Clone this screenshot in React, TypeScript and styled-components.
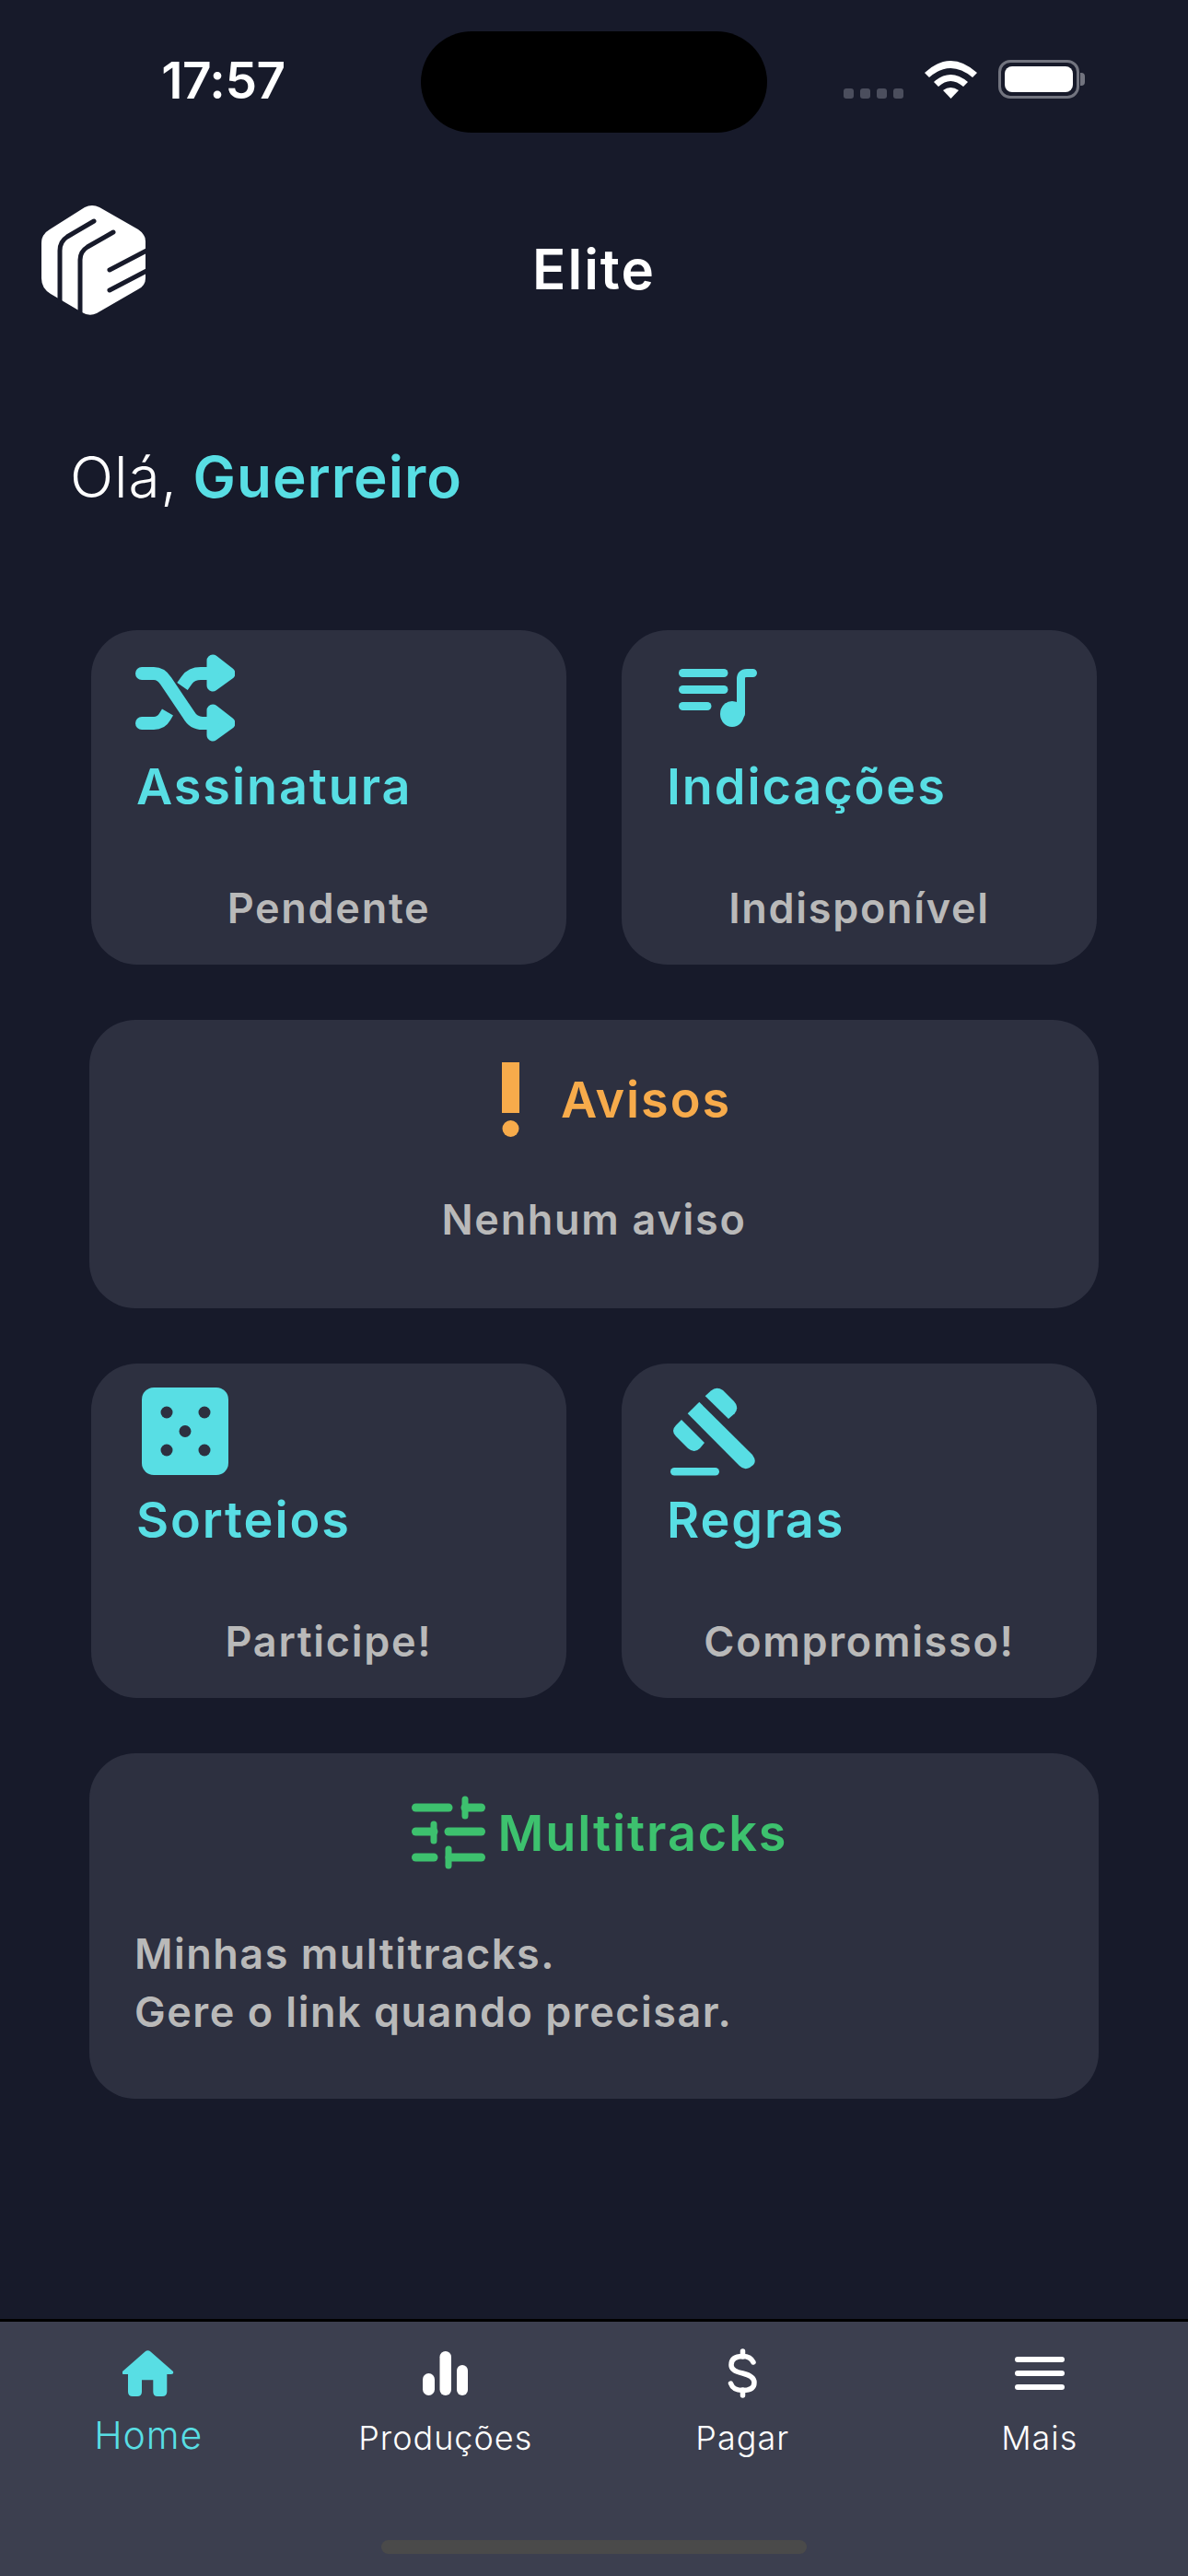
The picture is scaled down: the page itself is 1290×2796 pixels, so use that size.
import React from "react"
import styled, { createGlobalStyle } from "styled-components"

const CYAN = "#58dee4"
const ORANGE = "#f7ab4b"
const GREEN = "#3dc16e"
const GREY = "#b9b9b9"

const Global = createGlobalStyle`
 html, body {
  margin: 0;
  padding: 0;
  background: #171a2a;
 }

 * {
  box-sizing: border-box;
 }
`

const Logo = () => (
 <svg width="113" height="120" viewBox="0 0 113 120">
  <path
   d="M47 3 Q55 -1 63 3 L105 27 Q113 32 113 40 L113 80 Q113 88 105 92 L60 118 Q52 122 44 117 L10 97 Q0 91 0 80 L0 42 Q0 32 9 27 Z"
   fill="#fff"
  />
  <g fill="none" stroke="#171a2a" strokeWidth="5" strokeLinecap="round">
   <path d="M57 18 L28 35 Q20 40 20 50 L20 106" />
   <path d="M78 30 L50 46 Q42 51 42 60 L42 120" />
   <path d="M116 49 L74 71" />
   <path d="M116 71 L74 93" />
  </g>
 </svg>
)

const Wifi = () => (
 <svg width="57" height="41" viewBox="0 0 57 41" fill="#fff">
  <path d="M0 13 Q28 -13 57 13 L52 18 Q28 -2 5 18 Z" />
  <path d="M10 23 Q28 7 47 23 L42 28 Q28 16 15 28 Z" />
  <path d="M20 32 Q28 26 37 32 L28.5 41 Z" />
 </svg>
)

const Shuffle = () => (
 <svg width="108" height="95" viewBox="0 0 108 95">
  <g fill="none" stroke={CYAN} strokeWidth="14" strokeLinecap="round">
   <path d="M7 21 L20 21 Q28 21 33 29 L58 66 Q63 75 73 75 L86 75" />
   <path d="M7 75 L20 75 Q28 75 32 68 L35 63" strokeLinecap="butt" />
   <path d="M7 75 L14 75" />
   <path d="M51 35 L56 28 Q61 21 71 21 L86 21" strokeLinecap="butt" />
  </g>
  <path d="M84 7 L102 21 L84 34 Z" fill={CYAN} stroke={CYAN} strokeWidth="13" strokeLinejoin="round" />
  <path d="M84 61 L102 75 L84 88 Z" fill={CYAN} stroke={CYAN} strokeWidth="13" strokeLinejoin="round" />
 </svg>
)

const MusicList = () => (
 <svg width="85" height="63" viewBox="0 0 85 63">
  <g fill="none" stroke={CYAN} strokeWidth="9" strokeLinecap="round">
   <path d="M4.5 4.5 L49 4.5" />
   <path d="M4.5 22.5 L49 22.5" />
   <path d="M4.5 40.5 L31 40.5" />
   <path d="M67.5 49 L67.5 11 Q67.5 4.5 74 4.5 L80.5 4.5" />
  </g>
  <ellipse cx="58" cy="49" rx="13" ry="14" fill={CYAN} />
 </svg>
)

const Exclaim = () => (
 <svg width="19" height="81" viewBox="0 0 19 81" fill={ORANGE}>
  <rect width="19" height="55" />
  <circle cx="9.5" cy="72" r="9" />
 </svg>
)

const Dice = () => (
 <svg width="94" height="95" viewBox="0 0 94 95">
  <rect width="94" height="95" rx="13" fill={CYAN} />
  <g fill="#2d3040">
   <circle cx="27" cy="27" r="6.5" />
   <circle cx="68" cy="27" r="6.5" />
   <circle cx="47" cy="47.5" r="6.5" />
   <circle cx="27" cy="68" r="6.5" />
   <circle cx="68" cy="68" r="6.5" />
  </g>
 </svg>
)

const Gavel = () => (
 <svg width="93" height="96" viewBox="0 0 93 96" fill={CYAN}>
  <path d="M19.7 28.3 L32.3 15.7 L90 73 Q95 80 91 84 L87 87 Q81 90 76 85 Z" />
  <path d="M38.7 9.3 L45 3.5 Q51 -1.5 58 3 L70 15 Q76 22 70.7 28.3 L64 34 Z" />
  <path d="M13 35 L7 41 Q1 47 7 53 L20 66 Q27 72 33 66 L38 60 Z" />
  <rect x="1" y="87" width="53" height="8.500" rx="4.250" />
 </svg>
)

const Sliders = () => (
 <svg width="80" height="80" viewBox="0 0 80 80">
  <g fill="none" stroke={GREEN} strokeWidth="9" strokeLinecap="round">
   <path d="M4.5 13 L40 13" />
   <path d="M58 13 L75.500 13" />
   <path d="M58 4 L58 22" strokeWidth="7" />
   <path d="M4.500 39 L24 39" />
   <path d="M24 31 L24 49" strokeWidth="7" />
   <path d="M40 39 L75.500 39" />
   <path d="M4.500 67 L24 67" />
   <path d="M41 67 L75.500 67" />
   <path d="M40 58 L40 76" strokeWidth="7" />
  </g>
 </svg>
)

const HomeIcon = () => (
 <svg width="56" height="50" viewBox="0 0 56 50">
  <path
   d="M24.500 1.500 Q27.500 -1 30.500 1.500 L55 23 Q56 26 53 26 L48.300 26 L48.300 45 Q48.300 50 43 50 L38 50 Q33.300 50 33.300 45 L33.300 32.300 L21 32.300 L21 45 Q21 50 16 50 L11 50 Q6 50 6 45 L6 26 L1.500 26 Q-1 26 0 23 Z"
   fill={CYAN}
  />
 </svg>
)

const BarsIcon = () => (
 <svg width="49" height="48" viewBox="0 0 49 48" fill="#fff">
  <rect x="0" y="24" width="13" height="24" rx="6.5" />
  <rect x="18.500" y="0" width="12.500" height="48" rx="6.250" />
  <rect x="37" y="15" width="12" height="33" rx="6" />
 </svg>
)

const DollarIcon = () => (
 <svg width="33" height="54" viewBox="0 0 33 54">
  <g fill="none" stroke="#fff" strokeWidth="5.500" strokeLinecap="round">
   <path d="M16.500 3 L16.500 9" />
   <path d="M16.500 45 L16.500 51" />
   <path d="M28 15 Q25 8.500 16.500 8.500 Q4 8.500 4 18 Q4 24.500 16.500 27 Q29 30 29 37 Q29 45.500 16.500 45.500 Q6 45.500 3.500 38" />
  </g>
 </svg>
)

const MenuIcon = () => (
 <svg width="54" height="36" viewBox="0 0 54 36" fill="#fff">
  <rect y="0" width="54" height="6" rx="3" />
  <rect y="15" width="54" height="6" rx="3" />
  <rect y="30" width="54" height="6" rx="3" />
 </svg>
)

const smallCards = [
 [
  { title: "Assinatura", status: "Pendente", icon: <Shuffle />, inset: 48 },
  { title: "Indicações", status: "Indisponível", icon: <MusicList />, inset: 62 }
 ],
 [
  { title: "Sorteios", status: "Participe!", icon: <Dice />, inset: 55 },
  { title: "Regras", status: "Compromisso!", icon: <Gavel />, inset: 52 }
 ]
]

const tabs = [
 { label: "Home", icon: <HomeIcon />, active: true },
 { label: "Produções", icon: <BarsIcon />, active: false },
 { label: "Pagar", icon: <DollarIcon />, active: false },
 { label: "Mais", icon: <MenuIcon />, active: false }
]

const SmallCardRow = ({ items }: { items: typeof smallCards[number] }) => (
 <Row>
  {items.map(item => (
   <SmallCard key={item.title}>
    <IconSlot $inset={item.inset}>{item.icon}</IconSlot>
    <SmallTitle>{item.title}</SmallTitle>
    <Status>{item.status}</Status>
   </SmallCard>
  ))}
 </Row>
)

const App = () => (
 <Page>
  <Global />
  <StatusBar>
   <Time>17:57</Time>
   <Island />
   <StatusIcons>
    <SignalDots>
     <Dot />
     <Dot />
     <Dot />
     <Dot />
    </SignalDots>
    <Wifi />
    <Battery>
     <BatteryFill />
    </Battery>
    <BatteryNub />
   </StatusIcons>
  </StatusBar>

  <Header>
   <Logo />
   <Title>Elite</Title>
  </Header>

  <Greeting>
   Olá, <Name>Guerreiro</Name>
  </Greeting>

  <Cards>
   <SmallCardRow items={smallCards[0]} />
   <WideCard $height={313}>
    <WideHeader $gap={44.5} $top={46} $after={63} $shift={49.5} $height={81}>
     <Exclaim />
     <WideTitle $color={ORANGE}>Avisos</WideTitle>
    </WideHeader>
    <Status>Nenhum aviso</Status>
   </WideCard>
   <SmallCardRow items={smallCards[1]} />
   <WideCard $height={375}>
    <WideHeader $gap={14} $top={46} $after={60} $shift={12} $height={80}>
     <Sliders />
     <WideTitle $color={GREEN}>Multitracks</WideTitle>
    </WideHeader>
    <LongText>
     Minhas multitracks.
     <br />
     Gere o link quando precisar.
    </LongText>
   </WideCard>
  </Cards>

  <TabBar>
   <Tabs>
    {tabs.map(tab => (
     <Tab key={tab.label}>
      <TabIcon>{tab.icon}</TabIcon>
      <TabLabel $active={tab.active}>{tab.label}</TabLabel>
     </Tab>
    ))}
   </Tabs>
   <HomeBar />
  </TabBar>
 </Page>
)

export default App

const Page = styled.div`
 display: flex;
 flex-direction: column;
 width: 1290px;
 height: 2796px;
 overflow: hidden;
 background: #171a2a;
 color: #fff;
 font-family: Inter, "Noto Sans", sans-serif;
`

const StatusBar = styled.div`
 display: grid;
 grid-template-columns: 457px 376px 1fr;
 height: 144px;
 padding-top: 34px;
`

const Time = styled.div`
 padding-top: 22px;
 padding-left: 28px;
 font-size: 55px;
 font-weight: 600;
 line-height: 62px;
 letter-spacing: -0.5px;
 text-align: center;
`

const Island = styled.div`
 height: 110px;
 border-radius: 55px;
 background: #000;
`

const StatusIcons = styled.div`
 display: flex;
 align-items: flex-end;
 height: 73px;
 padding-left: 83px;
`

const SignalDots = styled.div`
 display: flex;
 gap: 7px;
 margin-right: 23px;
`

const Dot = styled.span`
 width: 11px;
 height: 11px;
 border-radius: 3px;
 background: #4b4e5d;
`

const Battery = styled.div`
 display: flex;
 width: 88px;
 height: 42px;
 margin-left: 23px;
 padding: 4px;
 border: 3.5px solid #72747f;
 border-radius: 13px;
`

const BatteryFill = styled.span`
 flex: 1;
 border-radius: 8px;
 background: #fff;
`

const BatteryNub = styled.span`
 width: 5px;
 height: 14px;
 margin: 0 0 14px 1px;
 border-radius: 0 4px 4px 0;
 background: #72747f;
`

const Header = styled.header`
 display: grid;
 grid-template-columns: 1fr auto 1fr;
 align-items: center;
 height: 120px;
 margin-top: 78px;
 padding: 0 45px;
`

const Title = styled.h1`
 grid-column: 2;
 margin: 0;
 padding-top: 20px;
 font-size: 60px;
 font-weight: 600;
 line-height: 68px;
 letter-spacing: 2px;
`

const Greeting = styled.div`
 margin-top: 140px;
 padding-left: 76px;
 font-size: 62px;
 font-weight: 300;
 line-height: 72px;
 letter-spacing: 1px;
`

const Name = styled.span`
 margin-left: -2px;
 color: ${CYAN};
 font-weight: 600;
`

const Cards = styled.main`
 display: flex;
 flex-direction: column;
 gap: 60px;
 margin-top: 130px;
 padding: 0 97px;
`

const Row = styled.div`
 display: grid;
 grid-template-columns: 516px 516px;
 gap: 60px;
 padding: 0 2px;
`

const SmallCard = styled.section`
 display: flex;
 flex-direction: column;
 height: 363px;
 padding-top: 26px;
 border-radius: 50px;
 background: #2d3040;
`

const IconSlot = styled.div<{ $inset: number }>`
 display: flex;
 align-items: center;
 height: 95px;
 padding-left: ${p => p.$inset}px;
`

const SmallTitle = styled.h2`
 margin: 17px 0 74px;
 padding-left: 49px;
 font-size: 54px;
 font-weight: 600;
 line-height: 63px;
 letter-spacing: 1.9px;
 color: ${CYAN};
`

const Status = styled.p`
 margin: 0;
 font-size: 45px;
 font-weight: 600;
 line-height: 54px;
 letter-spacing: 1.7px;
 color: ${GREY};
 text-align: center;
`

const WideCard = styled.section<{ $height: number }>`
 display: flex;
 flex-direction: column;
 height: ${p => p.$height}px;
 border-radius: 50px;
 background: #2d3040;
`

const WideHeader = styled.div<{ $gap: number; $top: number; $after: number; $shift: number; $height: number }>`
 display: flex;
 align-items: center;
 justify-content: center;
 gap: ${p => p.$gap}px;
 height: ${p => p.$height}px;
 margin: ${p => p.$top}px 0 ${p => p.$after}px;
 padding-left: ${p => p.$shift}px;
`

const WideTitle = styled.h2<{ $color: string }>`
 margin: 0;
 font-size: 54px;
 font-weight: 600;
 line-height: 63px;
 letter-spacing: 1.9px;
 color: ${p => p.$color};
`

const LongText = styled.p`
 margin: 0;
 padding-left: 49px;
 font-size: 45px;
 font-weight: 600;
 line-height: 63px;
 letter-spacing: 1.5px;
 color: ${GREY};
`

const TabBar = styled.nav`
 display: flex;
 flex-direction: column;
 align-items: center;
 height: 279px;
 margin-top: auto;
 border-top: 3px solid #000;
 background: #3c3f4f;
`

const Tabs = styled.div`
 display: grid;
 grid-template-columns: repeat(4, 1fr);
 width: 100%;
 height: 237px;
`

const Tab = styled.div`
 display: flex;
 flex-direction: column;
 align-items: center;
`

const TabIcon = styled.div`
 display: flex;
 align-items: center;
 justify-content: center;
 height: 56px;
 margin-top: 28px;
`

const TabLabel = styled.span<{ $active: boolean }>`
 margin-top: ${p => (p.$active ? 17 : 20)}px;
 font-size: ${p => (p.$active ? 41 : 36)}px;
 font-weight: 300;
 line-height: 44px;
 letter-spacing: 1px;
 color: ${p => (p.$active ? CYAN : "#fff")};
`

const HomeBar = styled.div`
 width: 462px;
 height: 15px;
 border-radius: 8px;
 background: #4a4a4a;
`
